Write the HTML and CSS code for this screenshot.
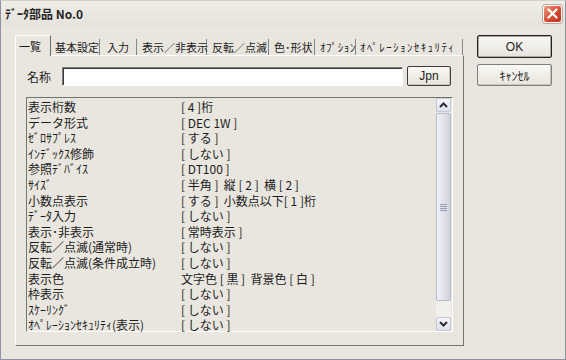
FILE: index.html
```html
<!DOCTYPE html>
<html lang="ja">
<head>
    <meta charset="UTF-8">
    <title>ﾃﾞｰﾀ部品 No.0</title>
    <link rel="stylesheet" href="styles.css">
</head>
<body>
    <div class="window">
        <div class="titlebar">
            <span class="title">ﾃﾞｰﾀ部品 No.0</span>
            <span class="close">
                <svg width="11" height="11" viewBox="0 0 11 11"><path d="M1.5 1.5 L9.5 9.5 M9.5 1.5 L1.5 9.5" stroke="#fff" stroke-width="2.2" stroke-linecap="round"/></svg>
            </span>
        </div>

        <div class="client">
            <div class="tabs-area">
                <div class="tabs">
                    <div class="tab active">一覧</div>
                    <div class="tab">基本設定</div>
                    <div class="tab">入力</div>
                    <div class="tab">表示／非表示</div>
                    <div class="tab">反転／点滅</div>
                    <div class="tab">色･形状</div>
                    <div class="tab hw">ｵﾌﾟｼｮﾝ</div>
                    <div class="tab hw-wide">ｵﾍﾟﾚｰｼｮﾝｾｷｭﾘﾃｨ</div>
                </div>

                <div class="panel">
                    <div class="name-row">
                        <label class="name-label">名称</label>
                        <input class="name-input" type="text">
                        <button class="btn jpn">Jpn</button>
                    </div>

                    <div class="listbox">
                        <div class="rows">
                            <div class="row"><span class="key">表示桁数</span><span class="val">[ 4 ]桁</span></div>
                            <div class="row"><span class="key">データ形式</span><span class="val">[ DEC 1W ]</span></div>
                            <div class="row"><span class="key">ｾﾞﾛｻﾌﾟﾚｽ</span><span class="val">[ する ]</span></div>
                            <div class="row"><span class="key">ｲﾝﾃﾞｯｸｽ修飾</span><span class="val">[ しない ]</span></div>
                            <div class="row"><span class="key">参照ﾃﾞﾊﾞｲｽ</span><span class="val">[ DT100 ]</span></div>
                            <div class="row"><span class="key">ｻｲｽﾞ</span><span class="val">[ 半角 ]&nbsp; 縦 [ 2 ]&nbsp; 横 [ 2 ]</span></div>
                            <div class="row"><span class="key">小数点表示</span><span class="val">[ する ]&nbsp; 小数点以下[ 1 ]桁</span></div>
                            <div class="row"><span class="key">ﾃﾞｰﾀ入力</span><span class="val">[ しない ]</span></div>
                            <div class="row"><span class="key">表示･非表示</span><span class="val">[ 常時表示 ]</span></div>
                            <div class="row"><span class="key">反転／点滅(通常時)</span><span class="val">[ しない ]</span></div>
                            <div class="row"><span class="key">反転／点滅(条件成立時)</span><span class="val">[ しない ]</span></div>
                            <div class="row"><span class="key">表示色</span><span class="val">文字色 [ 黒 ]&nbsp; 背景色 [ 白 ]</span></div>
                            <div class="row"><span class="key">枠表示</span><span class="val">[ しない ]</span></div>
                            <div class="row"><span class="key">ｽｹｰﾘﾝｸﾞ</span><span class="val">[ しない ]</span></div>
                            <div class="row"><span class="key">ｵﾍﾟﾚｰｼｮﾝｾｷｭﾘﾃｨ(表示)</span><span class="val">[ しない ]</span></div>
                        </div>

                        <div class="scrollbar">
                            <div class="sb-btn">
                                <svg width="9" height="6" viewBox="0 0 9 6"><path d="M1 5 L4.5 1.5 L8 5" fill="none" stroke="#2d2d3a" stroke-width="2"/></svg>
                            </div>
                            <div class="sb-thumb">
                                <span class="grip"></span>
                            </div>
                            <div class="sb-track"></div>
                            <div class="sb-btn">
                                <svg width="9" height="6" viewBox="0 0 9 6"><path d="M1 1 L4.5 4.5 L8 1" fill="none" stroke="#2d2d3a" stroke-width="2"/></svg>
                            </div>
                        </div>
                    </div>
                </div>
            </div>

            <div class="side-buttons">
                <button class="btn default">OK</button>
                <button class="btn">ｷｬﾝｾﾙ</button>
            </div>
        </div>
    </div>
</body>
</html>
```

FILE: styles.css
```css
/* Dialog base */
body {
    margin: 0;
    background: #e9e6df;
    font-family: "Noto Sans CJK JP", "DejaVu Sans", sans-serif;
    font-size: 12px;
    color: #1c1c1c;
}
.window {
    width: 566px;
    height: 360px;
    box-sizing: border-box;
    border: 1px solid #8e93a4;
    border-top-color: #d4d1c9;
    background: #e9e6df;
    display: flex;
    flex-direction: column;
}

/* Title bar */
.titlebar {
    height: 25px;
    display: flex;
    align-items: center;
    justify-content: space-between;
    padding: 0 3px 0 4px;
    background: linear-gradient(#efede8, #e6e3dc);
}
.title {
    font-weight: bold;
    font-size: 12px;
    color: #262626;
}
.close {
    width: 17px;
    height: 16px;
    border: 1px solid #fff;
    border-radius: 3px;
    background: linear-gradient(135deg, #eb9a80, #d0492f 60%, #b9361f);
    display: flex;
    align-items: center;
    justify-content: center;
    box-shadow: 0 0 0 1px #c4a69c;
}

/* Client area */
.client {
    flex: 1;
    display: flex;
    gap: 13px;
    padding: 9px 0 0 14px;
}
.tabs-area {
    width: 449px;
    display: flex;
    flex-direction: column;
}
.tabs {
    height: 20px;
    display: flex;
    align-items: flex-end;
    font-size: 11px;
}
.tab {
    height: 16px;
    line-height: 16px;
    box-sizing: border-box;
    padding-left: 5px;
    border-right: 1px solid #858585;
    white-space: nowrap;
}
.tab:nth-child(1) { width: 36px; }
.tab:nth-child(2) { width: 49px; padding-left: 4px; }
.tab:nth-child(3) { width: 37px; padding-left: 7px; }
.tab:nth-child(4) { width: 70px; }
.tab:nth-child(5) { width: 62px; }
.tab:nth-child(6) { width: 46px; }
.tab:nth-child(7) { width: 41px; }
.tab:nth-child(8) { width: 107px; }
.tab.hw { letter-spacing: 0.6px; }
.tab.hw-wide { letter-spacing: 1.4px; padding-left: 4px; }
.tab.active {
    height: 21px;
    line-height: 20px;
    margin-bottom: -1px;
    padding-left: 3px;
    border-left: 1px solid #fff;
    border-top: 1px solid #fff;
    border-right: 1px solid #6e6e6e;
    background: #e9e6df;
    position: relative;
    z-index: 1;
}
.panel {
    height: 291px;
    box-sizing: border-box;
    border: 1px solid #fff;
    border-right-color: #737373;
    border-bottom-color: #737373;
    padding: 10px 10px 0 10px;
}

/* Name row */
.name-row {
    height: 20px;
    display: flex;
    align-items: center;
}
.name-label {
    width: 35px;
    margin-left: 1px;
}
.name-input {
    width: 341px;
    height: 19px;
    box-sizing: border-box;
    margin: 0;
    border: 1px solid;
    border-color: #7c7c7c #fff #fff #7c7c7c;
    box-shadow: inset 1px 1px #3a3a3a;
    background: #fff;
}
.btn {
    font-family: "Liberation Sans", "Noto Sans CJK JP", sans-serif;
    font-size: 12px;
    color: #1c1c1c;
    border: 1px solid #7f7f7f;
    border-radius: 2px;
    background: linear-gradient(#f9f8f4, #e6e4dc);
    box-shadow: inset -1px -1px #c9c6bc;
    padding: 0;
    margin: 0;
}
.btn.jpn {
    width: 44px;
    height: 20px;
    margin-left: 4px;
    border-color: #3d3d3d;
}

/* List box */
.listbox {
    margin-top: 11px;
    height: 235px;
    box-sizing: border-box;
    border: 1px solid;
    border-color: #6f776c #fff #fff #6f776c;
    display: flex;
}
.rows {
    flex: 1;
    padding-top: 1px;
}
.row {
    height: 15.6px;
    line-height: 15.6px;
    display: flex;
    white-space: nowrap;
}
.key {
    width: 153px;
    padding-left: 1px;
}

/* Scrollbar */
.scrollbar {
    width: 15px;
    display: flex;
    flex-direction: column;
    margin-right: 1px;
}
.sb-btn {
    height: 14px;
    box-sizing: border-box;
    border: 1px solid #c4c6d6;
    border-radius: 2px;
    background: linear-gradient(#f6f6fb, #dfe0ec);
    display: flex;
    align-items: center;
    justify-content: center;
}
.sb-thumb {
    height: 188px;
    margin-top: 1px;
    box-sizing: border-box;
    border: 1px solid #b8b9cb;
    border-radius: 2px;
    background: linear-gradient(90deg, #f2f2f8, #dcdce8 70%, #cfd0de);
    display: flex;
    align-items: center;
    justify-content: center;
}
.grip {
    width: 7px;
    height: 7px;
    background: repeating-linear-gradient(#9a9cb2 0 1px, transparent 1px 2px);
}
.sb-track {
    flex: 1;
    background: #f1f0ec;
}

/* Side buttons */
.side-buttons {
    display: flex;
    flex-direction: column;
    gap: 6px;
}
.side-buttons .btn {
    width: 75px;
    height: 22px;
}
.side-buttons .btn.default {
    height: 23px;
    border-color: #222;
    box-shadow: inset 0 0 0 1px #a9a7a0;
}
```
